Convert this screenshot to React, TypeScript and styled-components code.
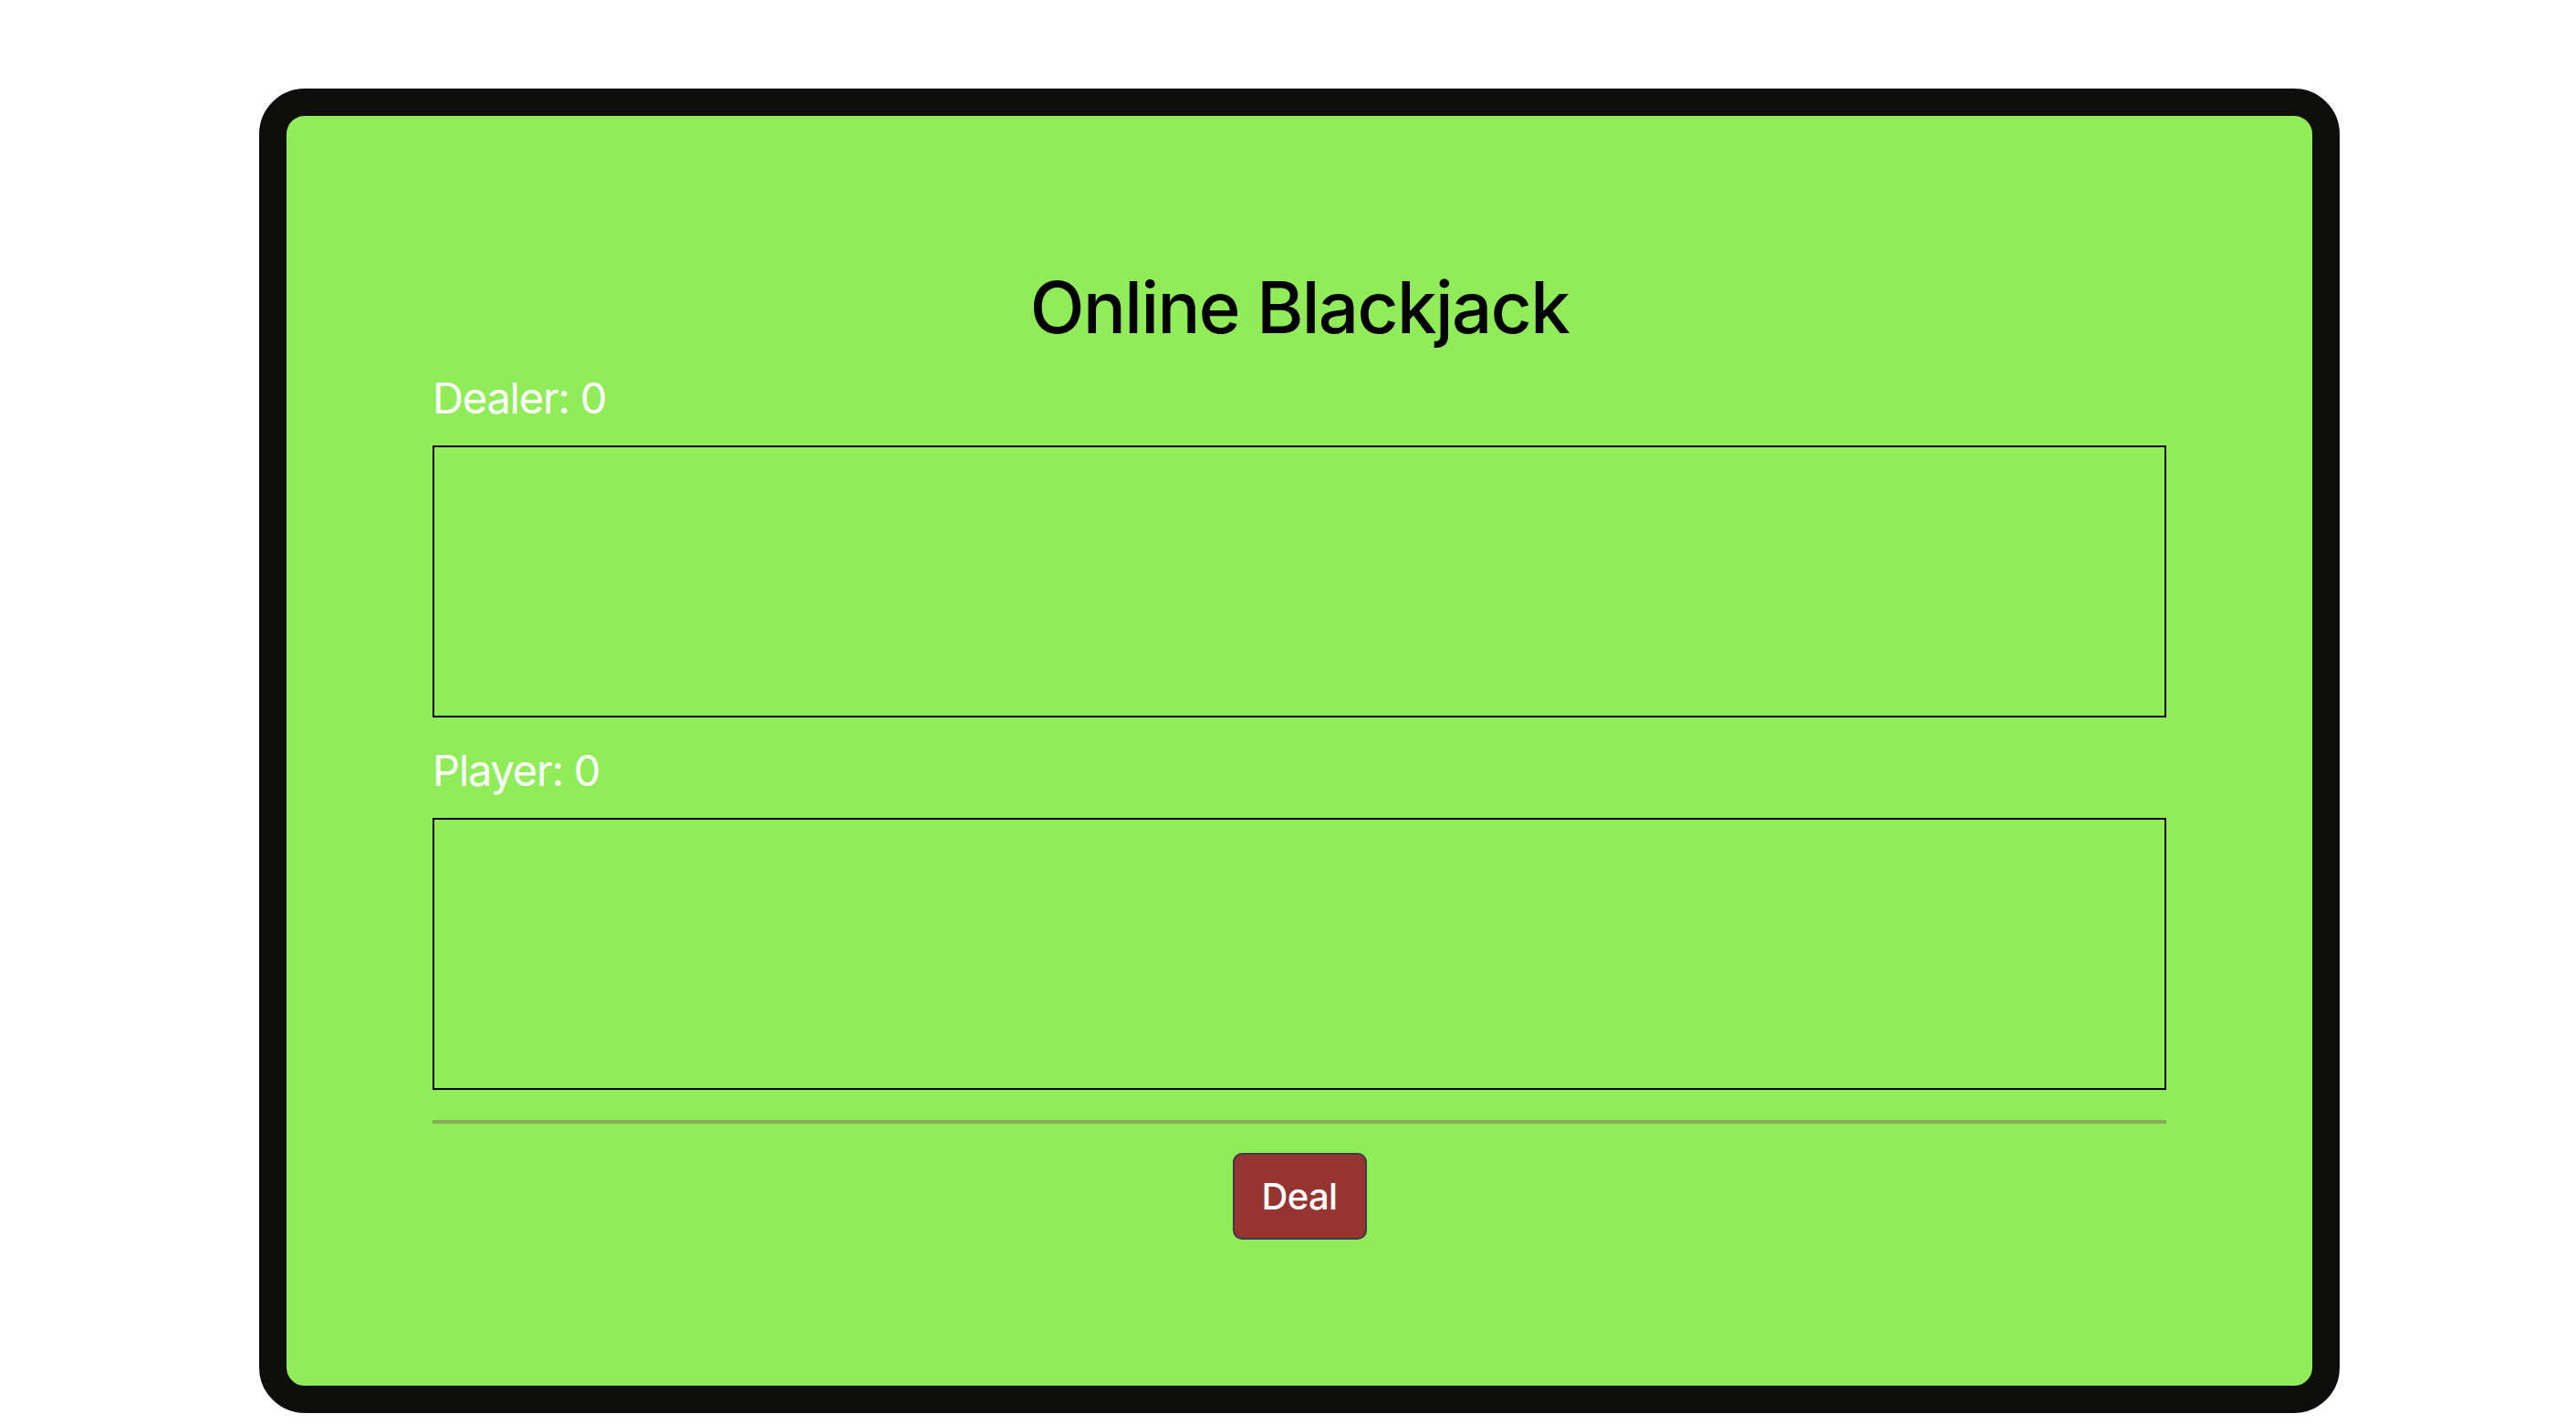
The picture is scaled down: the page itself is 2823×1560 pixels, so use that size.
import React from "react";
import styled, { createGlobalStyle } from "styled-components";

const Global = createGlobalStyle`
  html, body { margin: 0; padding: 0; background: #ffffff; }
  body { font-family: Inter, "Noto Sans", "Liberation Sans", sans-serif; }
`;

const Page = styled.div`
  padding: 97px 0 0 284px;
`;

const Table = styled.main`
  box-sizing: border-box;
  width: 2280px;
  border: 30px solid #0d0d0b;
  border-radius: 50px;
  background: #91ec5a;
  padding: 160px;
  display: flex;
  flex-direction: column;
`;

const Title = styled.h1`
  margin: 3px 0 23px;
  font-size: 78px;
  line-height: 94px;
  font-weight: 500;
  color: #000;
  text-align: center;
  letter-spacing: -1.6px;
`;

const HandLabel = styled.h2`
  margin: 0 0 24px;
  font-size: 47px;
  line-height: 57px;
  font-weight: 400;
  color: #ffffff;
  letter-spacing: -1.2px;
`;

const HandArea = styled.div<{ $gap: number }>`
  box-sizing: border-box;
  height: 298px;
  border: 2px solid #000;
  margin-bottom: ${(p) => p.$gap}px;
  display: flex;
  gap: 16px;
`;

const Divider = styled.hr`
  margin: 0 0 32px;
  border: none;
  height: 4px;
  background: #8aa75c;
`;

const Actions = styled.div`
  display: flex;
  justify-content: center;
`;

const DealButton = styled.button`
  box-sizing: border-box;
  width: 147px;
  height: 95px;
  background: #963432;
  color: #fff;
  border: 2px solid #3b3b4a;
  border-radius: 10px;
  font-family: Inter, "Noto Sans", sans-serif;
  font-size: 40px;
  font-weight: 500;
  letter-spacing: -0.6px;
  cursor: pointer;
`;

export default function App() {
  const dealerScore = 0;
  const playerScore = 0;
  return (
    <Page>
      <Global />
      <Table>
        <Title>Online Blackjack</Title>
        <HandLabel>Dealer: {dealerScore}</HandLabel>
        <HandArea $gap={29} />
        <HandLabel>Player: {playerScore}</HandLabel>
        <HandArea $gap={33} />
        <Divider />
        <Actions>
          <DealButton>Deal</DealButton>
        </Actions>
      </Table>
    </Page>
  );
}
